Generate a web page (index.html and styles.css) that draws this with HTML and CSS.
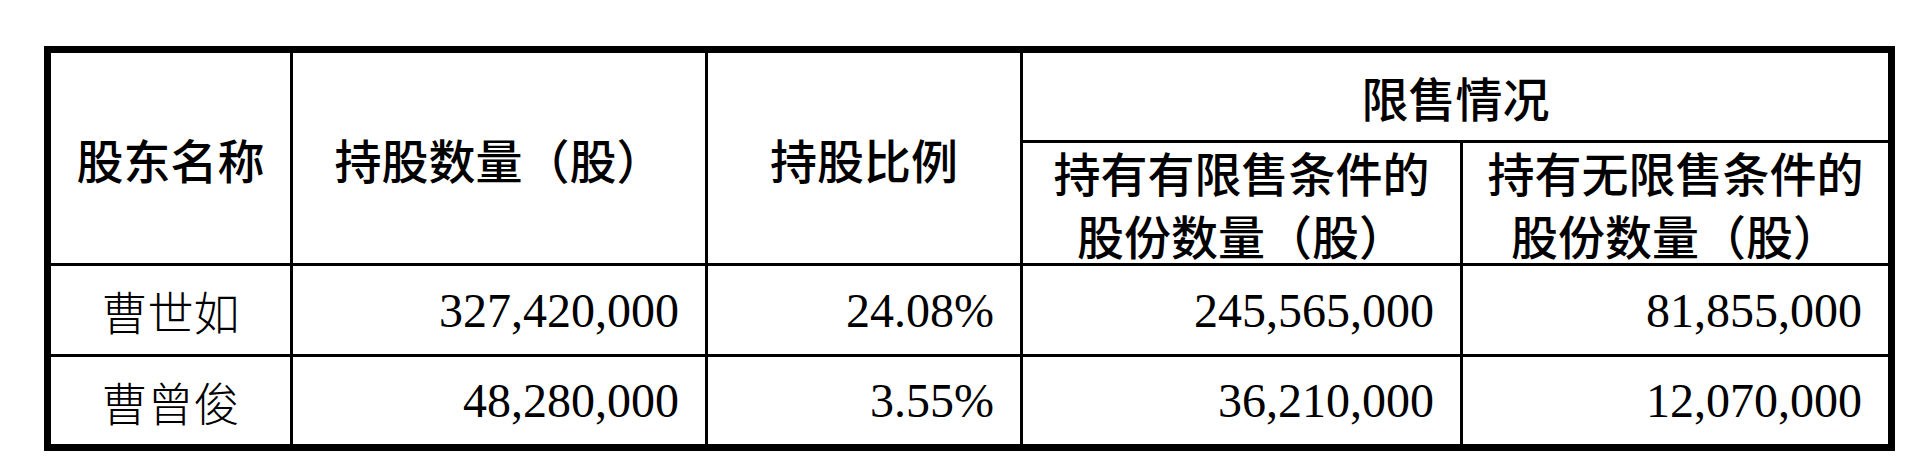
FILE: index.html
```html
<!DOCTYPE html>
<html lang="zh-CN">
<head>
<meta charset="utf-8">
<title>限售情况</title>
<link rel="stylesheet" href="styles.css">
</head>
<body>
<div class="page">
  <div class="sheet">
    <div class="cell head c1 span2">股东名称</div>
    <div class="cell head c2 span2">持股数量（股）</div>
    <div class="cell head c3 span2">持股比例</div>
    <div class="cell head c45">限售情况</div>
    <div class="cell head two">持有有限售条件的<br>股份数量（股）</div>
    <div class="cell head two">持有无限售条件的<br>股份数量（股）</div>

    <div class="cell name">曹世如</div>
    <div class="cell num">327,420,000</div>
    <div class="cell num">24.08%</div>
    <div class="cell num">245,565,000</div>
    <div class="cell num">81,855,000</div>

    <div class="cell name">曹曾俊</div>
    <div class="cell num">48,280,000</div>
    <div class="cell num">3.55%</div>
    <div class="cell num">36,210,000</div>
    <div class="cell num">12,070,000</div>
  </div>
</div>
</body>
</html>
```

FILE: styles.css
```css
html, body {
  margin: 0;
  padding: 0;
  background: #ffffff;
}

.page {
  padding: 46px 0 0 44px;
}

.sheet {
  display: grid;
  grid-template-columns: 239px 412px 312px 437px 425px;
  grid-template-rows: 87px 120px 88px 87px;
  gap: 3px;
  width: max-content;
  background: #000;
  border: 7px solid #000;
}

.cell {
  background: #fff;
  display: flex;
  align-items: center;
  color: #000;
}

.head {
  justify-content: center;
  text-align: center;
  font-family: "Noto Sans CJK SC", "Noto Sans", sans-serif;
  font-size: 47px;
  font-weight: 500;
  line-height: 63px;
}

.span2 {
  grid-row: span 2;
}

.c45 {
  grid-column: 4 / span 2;
}

.name {
  justify-content: center;
  font-family: "Noto Sans CJK SC", sans-serif;
  font-weight: 300;
  font-size: 46px;
}

.num {
  justify-content: flex-end;
  padding-right: 26px;
  font-family: "Liberation Serif", "Times New Roman", serif;
  font-size: 48px;
}
```
